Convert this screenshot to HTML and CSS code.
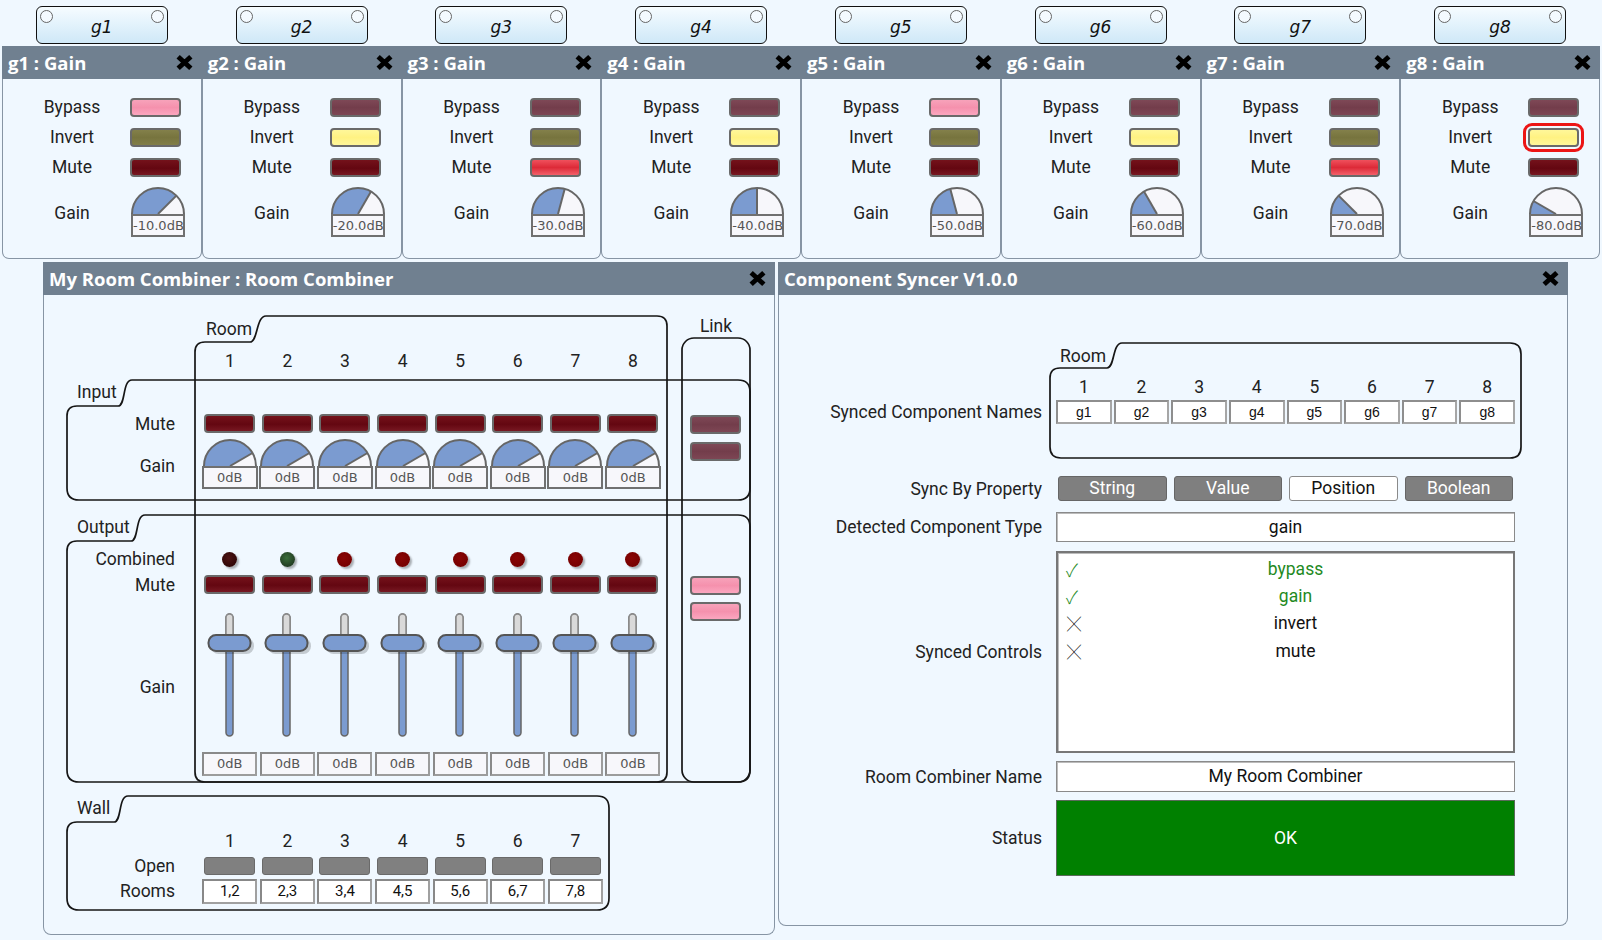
FILE: index.html
```html
<!DOCTYPE html>
<html>
<head>
<meta charset="utf-8">
<title>Component Syncer</title>
<link rel="stylesheet" href="styles.css">
</head>
<body>
<div class="top">
  <div class="gcol">
    <div class="dev"><i class="dot"></i><span class="devname">g1</span><i class="dot"></i></div>
    <section class="gpanel">
      <header class="hdr"><span>g1 : Gain</span><svg class="xic" viewBox="0 0 18 16"><path d="M3,2.5 L15,13.5 M15,2.5 L3,13.5"/></svg></header>
      <div class="gbody">
        <span class="glbl">Bypass</span><span class="led bp-on"></span>
        <span class="glbl">Invert</span><span class="led inv-off"></span>
        <span class="glbl">Mute</span><span class="led mu-off"></span>
        <span class="glbl gain">Gain</span>
        <div class="knob"><svg class="dial" viewBox="0 0 56 28"><path class="dbg" d="M2,28A26,26 0 0 1 54,28Z"/><path class="dfill" d="M28,28L2,28A26,26 0 0 1 46.4,9.6Z"/><path class="dline" d="M28,28L46.4,9.6"/><path class="drim" d="M2,28A26,26 0 0 1 54,28"/></svg><div class="kval">-10.0dB</div></div>
      </div>
    </section>
  </div>
  <div class="gcol">
    <div class="dev"><i class="dot"></i><span class="devname">g2</span><i class="dot"></i></div>
    <section class="gpanel">
      <header class="hdr"><span>g2 : Gain</span><svg class="xic" viewBox="0 0 18 16"><path d="M3,2.5 L15,13.5 M15,2.5 L3,13.5"/></svg></header>
      <div class="gbody">
        <span class="glbl">Bypass</span><span class="led bp-off"></span>
        <span class="glbl">Invert</span><span class="led inv-on"></span>
        <span class="glbl">Mute</span><span class="led mu-off"></span>
        <span class="glbl gain">Gain</span>
        <div class="knob"><svg class="dial" viewBox="0 0 56 28"><path class="dbg" d="M2,28A26,26 0 0 1 54,28Z"/><path class="dfill" d="M28,28L2,28A26,26 0 0 1 41,5.5Z"/><path class="dline" d="M28,28L41,5.5"/><path class="drim" d="M2,28A26,26 0 0 1 54,28"/></svg><div class="kval">-20.0dB</div></div>
      </div>
    </section>
  </div>
  <div class="gcol">
    <div class="dev"><i class="dot"></i><span class="devname">g3</span><i class="dot"></i></div>
    <section class="gpanel">
      <header class="hdr"><span>g3 : Gain</span><svg class="xic" viewBox="0 0 18 16"><path d="M3,2.5 L15,13.5 M15,2.5 L3,13.5"/></svg></header>
      <div class="gbody">
        <span class="glbl">Bypass</span><span class="led bp-off"></span>
        <span class="glbl">Invert</span><span class="led inv-off"></span>
        <span class="glbl">Mute</span><span class="led mu-on"></span>
        <span class="glbl gain">Gain</span>
        <div class="knob"><svg class="dial" viewBox="0 0 56 28"><path class="dbg" d="M2,28A26,26 0 0 1 54,28Z"/><path class="dfill" d="M28,28L2,28A26,26 0 0 1 34.7,2.9Z"/><path class="dline" d="M28,28L34.7,2.9"/><path class="drim" d="M2,28A26,26 0 0 1 54,28"/></svg><div class="kval">-30.0dB</div></div>
      </div>
    </section>
  </div>
  <div class="gcol">
    <div class="dev"><i class="dot"></i><span class="devname">g4</span><i class="dot"></i></div>
    <section class="gpanel">
      <header class="hdr"><span>g4 : Gain</span><svg class="xic" viewBox="0 0 18 16"><path d="M3,2.5 L15,13.5 M15,2.5 L3,13.5"/></svg></header>
      <div class="gbody">
        <span class="glbl">Bypass</span><span class="led bp-off"></span>
        <span class="glbl">Invert</span><span class="led inv-on"></span>
        <span class="glbl">Mute</span><span class="led mu-off"></span>
        <span class="glbl gain">Gain</span>
        <div class="knob"><svg class="dial" viewBox="0 0 56 28"><path class="dbg" d="M2,28A26,26 0 0 1 54,28Z"/><path class="dfill" d="M28,28L2,28A26,26 0 0 1 28,2Z"/><path class="dline" d="M28,28L28,2"/><path class="drim" d="M2,28A26,26 0 0 1 54,28"/></svg><div class="kval">-40.0dB</div></div>
      </div>
    </section>
  </div>
  <div class="gcol">
    <div class="dev"><i class="dot"></i><span class="devname">g5</span><i class="dot"></i></div>
    <section class="gpanel">
      <header class="hdr"><span>g5 : Gain</span><svg class="xic" viewBox="0 0 18 16"><path d="M3,2.5 L15,13.5 M15,2.5 L3,13.5"/></svg></header>
      <div class="gbody">
        <span class="glbl">Bypass</span><span class="led bp-on"></span>
        <span class="glbl">Invert</span><span class="led inv-off"></span>
        <span class="glbl">Mute</span><span class="led mu-off"></span>
        <span class="glbl gain">Gain</span>
        <div class="knob"><svg class="dial" viewBox="0 0 56 28"><path class="dbg" d="M2,28A26,26 0 0 1 54,28Z"/><path class="dfill" d="M28,28L2,28A26,26 0 0 1 21.3,2.9Z"/><path class="dline" d="M28,28L21.3,2.9"/><path class="drim" d="M2,28A26,26 0 0 1 54,28"/></svg><div class="kval">-50.0dB</div></div>
      </div>
    </section>
  </div>
  <div class="gcol">
    <div class="dev"><i class="dot"></i><span class="devname">g6</span><i class="dot"></i></div>
    <section class="gpanel">
      <header class="hdr"><span>g6 : Gain</span><svg class="xic" viewBox="0 0 18 16"><path d="M3,2.5 L15,13.5 M15,2.5 L3,13.5"/></svg></header>
      <div class="gbody">
        <span class="glbl">Bypass</span><span class="led bp-off"></span>
        <span class="glbl">Invert</span><span class="led inv-on"></span>
        <span class="glbl">Mute</span><span class="led mu-off"></span>
        <span class="glbl gain">Gain</span>
        <div class="knob"><svg class="dial" viewBox="0 0 56 28"><path class="dbg" d="M2,28A26,26 0 0 1 54,28Z"/><path class="dfill" d="M28,28L2,28A26,26 0 0 1 15,5.5Z"/><path class="dline" d="M28,28L15,5.5"/><path class="drim" d="M2,28A26,26 0 0 1 54,28"/></svg><div class="kval">-60.0dB</div></div>
      </div>
    </section>
  </div>
  <div class="gcol">
    <div class="dev"><i class="dot"></i><span class="devname">g7</span><i class="dot"></i></div>
    <section class="gpanel">
      <header class="hdr"><span>g7 : Gain</span><svg class="xic" viewBox="0 0 18 16"><path d="M3,2.5 L15,13.5 M15,2.5 L3,13.5"/></svg></header>
      <div class="gbody">
        <span class="glbl">Bypass</span><span class="led bp-off"></span>
        <span class="glbl">Invert</span><span class="led inv-off"></span>
        <span class="glbl">Mute</span><span class="led mu-on"></span>
        <span class="glbl gain">Gain</span>
        <div class="knob"><svg class="dial" viewBox="0 0 56 28"><path class="dbg" d="M2,28A26,26 0 0 1 54,28Z"/><path class="dfill" d="M28,28L2,28A26,26 0 0 1 9.6,9.6Z"/><path class="dline" d="M28,28L9.6,9.6"/><path class="drim" d="M2,28A26,26 0 0 1 54,28"/></svg><div class="kval">-70.0dB</div></div>
      </div>
    </section>
  </div>
  <div class="gcol">
    <div class="dev"><i class="dot"></i><span class="devname">g8</span><i class="dot"></i></div>
    <section class="gpanel">
      <header class="hdr"><span>g8 : Gain</span><svg class="xic" viewBox="0 0 18 16"><path d="M3,2.5 L15,13.5 M15,2.5 L3,13.5"/></svg></header>
      <div class="gbody">
        <span class="glbl">Bypass</span><span class="led bp-off"></span>
        <span class="glbl">Invert</span><span class="led inv-on selected"></span>
        <span class="glbl">Mute</span><span class="led mu-off"></span>
        <span class="glbl gain">Gain</span>
        <div class="knob"><svg class="dial" viewBox="0 0 56 28"><path class="dbg" d="M2,28A26,26 0 0 1 54,28Z"/><path class="dfill" d="M28,28L2,28A26,26 0 0 1 5.5,15Z"/><path class="dline" d="M28,28L5.5,15"/><path class="drim" d="M2,28A26,26 0 0 1 54,28"/></svg><div class="kval">-80.0dB</div></div>
      </div>
    </section>
  </div>
</div>

<div class="mid">
  <section class="comb">
    <header class="hdr"><span>My Room Combiner : Room Combiner</span><svg class="xic" viewBox="0 0 18 16"><path d="M3,2.5 L15,13.5 M15,2.5 L3,13.5"/></svg></header>
    <div class="cbody">
      <svg class="frames" viewBox="0 0 730 639" width="730" height="639">
        <path d="M151,57 Q151,47 161,47 L206,47 C214,47 212,21 222,21 L613,21 Q623,21 623,31 L623,477 Q623,487 613,487 L161,487 Q151,487 151,477 Z"/>
        <rect x="638" y="43" width="68" height="444" rx="12"/>
        <path d="M23,121 Q23,111 33,111 L74,111 C82,111 78,85 88,85 L694,85 Q706,85 706,97 L706,193 Q706,205 694,205 L35,205 Q23,205 23,193 Z"/>
        <path d="M23,256 Q23,246 33,246 L87,246 C95,246 91,220 101,220 L694,220 Q706,220 706,232 L706,475 Q706,487 694,487 L35,487 Q23,487 23,475 Z"/>
        <path d="M23,537 Q23,527 33,527 L70,527 C78,527 74,501 84,501 L553,501 Q565,501 565,513 L565,603 Q565,615 553,615 L35,615 Q23,615 23,603 Z"/>
        <text x="162" y="34">Room</text>
        <text x="672" y="31" text-anchor="middle">Link</text>
        <text x="33" y="97">Input</text>
        <text x="33" y="232">Output</text>
        <text x="33" y="513">Wall</text>
      </svg>

      <div class="cgrid nums">
        <span class="clbl"></span>
        <span class="num">1</span><span class="num">2</span><span class="num">3</span><span class="num">4</span><span class="num">5</span><span class="num">6</span><span class="num">7</span><span class="num">8</span>
      </div>

      <div class="cgrid inp">
        <div class="linkcell in-link"><span class="led bp-off"></span><span class="led bp-off"></span></div>
        <span class="clbl">Mute</span>
        <span class="led mu-off"></span><span class="led mu-off"></span><span class="led mu-off"></span><span class="led mu-off"></span><span class="led mu-off"></span><span class="led mu-off"></span><span class="led mu-off"></span><span class="led mu-off"></span>
        <span class="clbl in-gain">Gain</span>
        <div class="knob ck"><svg class="dial" viewBox="0 0 56 28"><path class="dbg" d="M2,28A26,26 0 0 1 54,28Z"/><path class="dfill" d="M28,28L2,28A26,26 0 0 1 50.5,15Z"/><path class="dline" d="M28,28L50.5,15"/><path class="drim" d="M2,28A26,26 0 0 1 54,28"/></svg><div class="kval">0dB</div></div>
        <div class="knob ck"><svg class="dial" viewBox="0 0 56 28"><path class="dbg" d="M2,28A26,26 0 0 1 54,28Z"/><path class="dfill" d="M28,28L2,28A26,26 0 0 1 50.5,15Z"/><path class="dline" d="M28,28L50.5,15"/><path class="drim" d="M2,28A26,26 0 0 1 54,28"/></svg><div class="kval">0dB</div></div>
        <div class="knob ck"><svg class="dial" viewBox="0 0 56 28"><path class="dbg" d="M2,28A26,26 0 0 1 54,28Z"/><path class="dfill" d="M28,28L2,28A26,26 0 0 1 50.5,15Z"/><path class="dline" d="M28,28L50.5,15"/><path class="drim" d="M2,28A26,26 0 0 1 54,28"/></svg><div class="kval">0dB</div></div>
        <div class="knob ck"><svg class="dial" viewBox="0 0 56 28"><path class="dbg" d="M2,28A26,26 0 0 1 54,28Z"/><path class="dfill" d="M28,28L2,28A26,26 0 0 1 50.5,15Z"/><path class="dline" d="M28,28L50.5,15"/><path class="drim" d="M2,28A26,26 0 0 1 54,28"/></svg><div class="kval">0dB</div></div>
        <div class="knob ck"><svg class="dial" viewBox="0 0 56 28"><path class="dbg" d="M2,28A26,26 0 0 1 54,28Z"/><path class="dfill" d="M28,28L2,28A26,26 0 0 1 50.5,15Z"/><path class="dline" d="M28,28L50.5,15"/><path class="drim" d="M2,28A26,26 0 0 1 54,28"/></svg><div class="kval">0dB</div></div>
        <div class="knob ck"><svg class="dial" viewBox="0 0 56 28"><path class="dbg" d="M2,28A26,26 0 0 1 54,28Z"/><path class="dfill" d="M28,28L2,28A26,26 0 0 1 50.5,15Z"/><path class="dline" d="M28,28L50.5,15"/><path class="drim" d="M2,28A26,26 0 0 1 54,28"/></svg><div class="kval">0dB</div></div>
        <div class="knob ck"><svg class="dial" viewBox="0 0 56 28"><path class="dbg" d="M2,28A26,26 0 0 1 54,28Z"/><path class="dfill" d="M28,28L2,28A26,26 0 0 1 50.5,15Z"/><path class="dline" d="M28,28L50.5,15"/><path class="drim" d="M2,28A26,26 0 0 1 54,28"/></svg><div class="kval">0dB</div></div>
        <div class="knob ck"><svg class="dial" viewBox="0 0 56 28"><path class="dbg" d="M2,28A26,26 0 0 1 54,28Z"/><path class="dfill" d="M28,28L2,28A26,26 0 0 1 50.5,15Z"/><path class="dline" d="M28,28L50.5,15"/><path class="drim" d="M2,28A26,26 0 0 1 54,28"/></svg><div class="kval">0dB</div></div>
      </div>

      <div class="cgrid outp">
        <div class="linkcell out-link"><span class="led bp-on"></span><span class="led bp-on"></span></div>
        <span class="clbl comb-l">Combined</span>
        <span class="lamp dark"></span><span class="lamp green"></span><span class="lamp"></span><span class="lamp"></span><span class="lamp"></span><span class="lamp"></span><span class="lamp"></span><span class="lamp"></span>
        <span class="clbl">Mute</span>
        <span class="led mu-off"></span><span class="led mu-off"></span><span class="led mu-off"></span><span class="led mu-off"></span><span class="led mu-off"></span><span class="led mu-off"></span><span class="led mu-off"></span><span class="led mu-off"></span>
        <span class="clbl out-gain">Gain</span>
        <svg class="fader" viewBox="0 0 48 124"><rect class="ftrk" x="20" y="1" width="7" height="122" rx="3.5"/><rect class="ftop" x="20" y="1" width="7" height="26" rx="3.5"/><rect class="fsh" x="5" y="25" width="43" height="16" rx="7.5"/><rect class="fth" x="2.5" y="22" width="42" height="16" rx="7.5"/></svg>
        <svg class="fader" viewBox="0 0 48 124"><rect class="ftrk" x="20" y="1" width="7" height="122" rx="3.5"/><rect class="ftop" x="20" y="1" width="7" height="26" rx="3.5"/><rect class="fsh" x="5" y="25" width="43" height="16" rx="7.5"/><rect class="fth" x="2.5" y="22" width="42" height="16" rx="7.5"/></svg>
        <svg class="fader" viewBox="0 0 48 124"><rect class="ftrk" x="20" y="1" width="7" height="122" rx="3.5"/><rect class="ftop" x="20" y="1" width="7" height="26" rx="3.5"/><rect class="fsh" x="5" y="25" width="43" height="16" rx="7.5"/><rect class="fth" x="2.5" y="22" width="42" height="16" rx="7.5"/></svg>
        <svg class="fader" viewBox="0 0 48 124"><rect class="ftrk" x="20" y="1" width="7" height="122" rx="3.5"/><rect class="ftop" x="20" y="1" width="7" height="26" rx="3.5"/><rect class="fsh" x="5" y="25" width="43" height="16" rx="7.5"/><rect class="fth" x="2.5" y="22" width="42" height="16" rx="7.5"/></svg>
        <svg class="fader" viewBox="0 0 48 124"><rect class="ftrk" x="20" y="1" width="7" height="122" rx="3.5"/><rect class="ftop" x="20" y="1" width="7" height="26" rx="3.5"/><rect class="fsh" x="5" y="25" width="43" height="16" rx="7.5"/><rect class="fth" x="2.5" y="22" width="42" height="16" rx="7.5"/></svg>
        <svg class="fader" viewBox="0 0 48 124"><rect class="ftrk" x="20" y="1" width="7" height="122" rx="3.5"/><rect class="ftop" x="20" y="1" width="7" height="26" rx="3.5"/><rect class="fsh" x="5" y="25" width="43" height="16" rx="7.5"/><rect class="fth" x="2.5" y="22" width="42" height="16" rx="7.5"/></svg>
        <svg class="fader" viewBox="0 0 48 124"><rect class="ftrk" x="20" y="1" width="7" height="122" rx="3.5"/><rect class="ftop" x="20" y="1" width="7" height="26" rx="3.5"/><rect class="fsh" x="5" y="25" width="43" height="16" rx="7.5"/><rect class="fth" x="2.5" y="22" width="42" height="16" rx="7.5"/></svg>
        <svg class="fader" viewBox="0 0 48 124"><rect class="ftrk" x="20" y="1" width="7" height="122" rx="3.5"/><rect class="ftop" x="20" y="1" width="7" height="26" rx="3.5"/><rect class="fsh" x="5" y="25" width="43" height="16" rx="7.5"/><rect class="fth" x="2.5" y="22" width="42" height="16" rx="7.5"/></svg>
        <span class="clbl"></span>
        <span class="vbox">0dB</span><span class="vbox">0dB</span><span class="vbox">0dB</span><span class="vbox">0dB</span><span class="vbox">0dB</span><span class="vbox">0dB</span><span class="vbox">0dB</span><span class="vbox">0dB</span>
      </div>

      <div class="cgrid wall">
        <span class="clbl"></span>
        <span class="num">1</span><span class="num">2</span><span class="num">3</span><span class="num">4</span><span class="num">5</span><span class="num">6</span><span class="num">7</span>
        <span class="clbl open-l">Open</span>
        <span class="wbtn"></span><span class="wbtn"></span><span class="wbtn"></span><span class="wbtn"></span><span class="wbtn"></span><span class="wbtn"></span><span class="wbtn"></span>
        <span class="clbl rooms-l">Rooms</span>
        <span class="rbox">1,2</span><span class="rbox">2,3</span><span class="rbox">3,4</span><span class="rbox">4,5</span><span class="rbox">5,6</span><span class="rbox">6,7</span><span class="rbox">7,8</span>
      </div>
    </div>
  </section>

  <section class="sync">
    <header class="hdr"><span>Component Syncer V1.0.0</span><svg class="xic" viewBox="0 0 18 16"><path d="M3,2.5 L15,13.5 M15,2.5 L3,13.5"/></svg></header>
    <div class="sbody">
      <div class="srow roomrow">
        <span class="slbl names-l">Synced Component Names</span>
        <div class="roomcell">
          <svg class="sframe" viewBox="0 0 473 117" width="473" height="117">
            <path d="M1,36 Q1,26 11,26 L58,26 C66,26 63,1 73,1 L461,1 Q472,1 472,12 L472,105 Q472,116 461,116 L12,116 Q1,116 1,105 Z"/>
            <text x="11" y="14">Room</text>
          </svg>
          <div class="sgrid">
            <span class="num">1</span><span class="num">2</span><span class="num">3</span><span class="num">4</span><span class="num">5</span><span class="num">6</span><span class="num">7</span><span class="num">8</span>
            <span class="nbox">g1</span><span class="nbox">g2</span><span class="nbox">g3</span><span class="nbox">g4</span><span class="nbox">g5</span><span class="nbox">g6</span><span class="nbox">g7</span><span class="nbox">g8</span>
          </div>
        </div>
      </div>
      <div class="srow byrow">
        <span class="slbl">Sync By Property</span>
        <div class="sctl btns">
          <span class="sbtn">String</span><span class="sbtn">Value</span><span class="sbtn on">Position</span><span class="sbtn">Boolean</span>
        </div>
      </div>
      <div class="srow typerow">
        <span class="slbl">Detected Component Type</span>
        <div class="sctl field typef">gain</div>
      </div>
      <div class="srow listrow">
        <span class="slbl">Synced Controls</span>
        <div class="sctl field list">
          <div class="li ok"><span class="mark">✓</span><span>bypass</span></div>
          <div class="li ok"><span class="mark">✓</span><span>gain</span></div>
          <div class="li"><span class="mark cross">╳</span><span>invert</span></div>
          <div class="li"><span class="mark cross">╳</span><span>mute</span></div>
        </div>
      </div>
      <div class="srow namerow">
        <span class="slbl">Room Combiner Name</span>
        <div class="sctl field namef">My Room Combiner</div>
      </div>
      <div class="srow statrow">
        <span class="slbl">Status</span>
        <div class="sctl status">OK</div>
      </div>
    </div>
  </section>
</div>
</body>
</html>
```

FILE: styles.css
```css
* { box-sizing: border-box; }

body {
  margin: 0;
  width: 1602px;
  height: 940px;
  overflow: hidden;
  background: #f0f8ff;
  font-family: Roboto, "Liberation Sans", sans-serif;
  font-size: 17.5px;
  color: #222;
}

/* ---------- top row of gain blocks ---------- */
.top {
  display: grid;
  grid-template-columns: repeat(8, 199.75px);
  padding: 6px 0 0 2px;
}
.gcol {
  display: flex;
  flex-direction: column;
  align-items: center;
}
.dev {
  width: 132px;
  height: 38px;
  border: 1.5px solid #111;
  border-radius: 6px;
  background: linear-gradient(#f6fcff, #e4f3fc 45%, #cfe8f7);
  display: grid;
  grid-template-columns: 13px 1fr 13px;
  padding: 3px 3px 0;
}
.dot {
  width: 13px;
  height: 13px;
  border-radius: 50%;
  border: 1.3px solid #666;
  background: #f4faff;
}
.devname {
  text-align: center;
  font: italic 17px/34px "DejaVu Sans", sans-serif;
  color: #111;
}
.gpanel { width: 100%; margin-top: 2px; }

.hdr {
  height: 33px;
  background: #708090;
  color: #fff;
  display: flex;
  align-items: center;
  justify-content: space-between;
  padding: 0 8px 0 6px;
  font: 700 18.5px "Open Sans", "DejaVu Sans", sans-serif;
  white-space: nowrap;
}
.xic { width: 19px; height: 17px; flex: none; }
.xic path { stroke: #000; stroke-width: 4.6; fill: none; }

.gbody {
  height: 180px;
  border: 1px solid #8795a4;
  border-top: none;
  border-radius: 0 0 7px 7px;
  display: grid;
  grid-template-columns: 116px 56px;
  grid-template-rows: 30px 30px 30px 55px;
  align-items: center;
  padding: 13px 0 0 11px;
}
.glbl { text-align: center; line-height: 20px; }
.glbl.gain { padding-top: 6px; }
.gbody .led { justify-self: start; }
.gbody .knob { align-self: end; }

/* ---------- buttons / LEDs ---------- */
.led {
  display: block;
  width: 51px;
  height: 19px;
  border: 2px solid #6a6a6a;
  border-radius: 4px;
  justify-self: center;
}
.bp-on  { background: linear-gradient(#f7a2ba, #f591ad 50%, #fba6bf); }
.bp-off { background: linear-gradient(#7e4856, #733d4b 50%, #7d4654); }
.inv-on { background: linear-gradient(#fff79a, #fff282 50%, #fff79a); }
.inv-off{ background: linear-gradient(#83804a, #77743e 50%, #817e48); }
.mu-on  { background: linear-gradient(#f0505c, #dd2a38 50%, #f3606a); }
.mu-off { background: linear-gradient(#74121b, #640711 55%, #771822); }
.selected { outline: 3px solid #ec1515; outline-offset: 2px; }

/* ---------- dial ---------- */
.knob { width: 56px; justify-self: center; }
.dial { display: block; width: 56px; height: 28px; }
.dbg { fill: #f7f7fb; }
.dfill { fill: #7b9bd0; }
.dline { stroke: #666; stroke-width: 2; fill: none; }
.drim { stroke: #666; stroke-width: 2; fill: none; }
.kval {
  height: 23px;
  margin: 0 1px;
  border: 2px solid #707070;
  background: #f7f7fb;
  font: 13px/19px "DejaVu Sans", sans-serif;
  color: #555;
  text-align: center;
  white-space: nowrap;
}

/* ---------- middle ---------- */
.mid {
  display: flex;
  align-items: flex-start;
  gap: 3px;
  margin: 3px 0 0 43px;
}
.comb { width: 732px; }
.sync { width: 790px; }

.cbody {
  position: relative;
  display: flow-root;
  height: 640px;
  border: 1px solid #8795a4;
  border-top: none;
  border-radius: 0 0 8px 8px;
}
.frames { position: absolute; left: 0; top: 0; pointer-events: none; }
.frames path, .frames rect, .sframe path {
  fill: none;
  stroke: #161616;
  stroke-width: 1.7;
}
.frames text, .sframe text {
  font-family: Roboto, "Liberation Sans", sans-serif;
  font-size: 17.5px;
  fill: #222;
  dominant-baseline: central;
}

.cgrid {
  display: grid;
  grid-template-columns: 157px repeat(8, 57.6px) 20.2px 68px;
  align-items: end;
}
.clbl {
  grid-column: 1;
  text-align: right;
  padding-right: 26px;
  line-height: 18px;
  white-space: nowrap;
}
.num { text-align: center; line-height: 24px; }

.nums { margin-top: 54px; height: 24px; }

.inp { margin-top: 42px; grid-template-rows: 18px 56px; }
.in-gain { align-self: start; margin-top: 23px; line-height: 20px; }
.ck { align-self: end; }
.ck .kval { margin: 0; }

.linkcell {
  grid-column: 11;
  display: flex;
  flex-direction: column;
  align-items: center;
  align-self: start;
}
.in-link { grid-row: 1 / span 2; gap: 8px; }
.out-link { grid-row: 2 / span 2; gap: 7px; margin-top: 5px; }

.outp { margin-top: 58px; grid-template-rows: 24px 23px 143px 39px; }
.comb-l { align-self: center; line-height: 24px; }
.out-gain { align-self: start; margin-top: 83px; line-height: 20px; }
.lamp {
  width: 15px;
  height: 15px;
  border-radius: 50%;
  background: radial-gradient(circle at 45% 40%, #8a0505, #760000 70%);
  box-shadow: 2px 2px 2px rgba(0, 0, 0, 0.3);
  justify-self: center;
  align-self: center;
}
.lamp.dark { background: radial-gradient(circle at 45% 40%, #4e1414, #2e0606 75%); }
.lamp.green { background: radial-gradient(circle at 45% 40%, #3a6e3a, #1f361f 80%); }

.fader { width: 48px; height: 124px; justify-self: center; display: block; }
.ftrk { fill: #7b9bd0; stroke: #666; stroke-width: 1.5; }
.ftop { fill: #d9d9d9; stroke: #8a8a8a; stroke-width: 1.5; }
.fsh { fill: rgba(0, 0, 0, 0.18); }
.fth { fill: #7b9bd0; stroke: #555; stroke-width: 2; }

.vbox {
  width: 55px;
  height: 24px;
  justify-self: center;
  border: 2px solid #9c9c9c;
  border-top-color: #8a8a8a;
  border-left-color: #8a8a8a;
  background: #f7f7fb;
  font: 13px/20px "DejaVu Sans", sans-serif;
  color: #555;
  text-align: center;
}

.wall { margin-top: 53px; grid-template-rows: 24px 22px 29px; }
.rooms-l { line-height: 25px; }
.wbtn {
  width: 51px;
  height: 18px;
  justify-self: center;
  background: #808080;
  border: 1.5px solid #6a6a6a;
  border-radius: 3px;
}
.rbox {
  width: 55px;
  height: 25px;
  justify-self: center;
  background: #fff;
  border: 2px solid #a0a0a0;
  border-top-color: #888;
  border-left-color: #888;
  text-align: center;
  font-size: 15px;
  line-height: 21px;
  color: #111;
}

/* ---------- syncer ---------- */
.sbody {
  height: 631px;
  border: 1px solid #8795a4;
  border-top: none;
  border-radius: 0 0 8px 8px;
  padding-top: 47px;
}
.srow { display: flex; align-items: center; }
.slbl {
  flex: none;
  width: 263px;
  text-align: right;
  line-height: 20px;
  white-space: nowrap;
}
.sctl { flex: none; width: 459px; margin-left: 14px; }

.roomrow { align-items: flex-start; }
.names-l { margin-top: 60px; }
.roomcell { position: relative; width: 473px; height: 117px; margin-left: 7px; }
.sframe { position: absolute; left: 0; top: 0; }
.sgrid {
  position: relative;
  display: grid;
  grid-template-columns: repeat(8, 1fr);
  column-gap: 2px;
  padding: 33px 7px 0;
}
.nbox {
  height: 24px;
  margin-top: 1px;
  background: #fff;
  border: 2px solid #a6a6a6;
  border-top-color: #8e8e8e;
  border-left-color: #8e8e8e;
  text-align: center;
  font: 14px/20px "Liberation Sans", Arial, sans-serif;
  color: #111;
}

.byrow { margin-top: 17px; }
.btns { display: flex; gap: 7px; padding: 0 2px; }
.sbtn {
  flex: 1;
  height: 25px;
  line-height: 23px;
  text-align: center;
  background: #7f7f7f;
  border: 1px solid #666;
  border-radius: 3px;
  color: #fff;
}
.sbtn.on { background: #fff; color: #111; border-color: #8a8a8a; }

.field {
  background: #fff;
  border: 1px solid #8a8a8a;
  box-shadow: inset 1px 1px 0 #bbb;
  text-align: center;
  color: #111;
}
.typerow { margin-top: 11px; }
.typef { height: 30px; line-height: 28px; }
.listrow { margin-top: 9px; }
.list { height: 202px; padding-top: 2px; border-width: 2px; border-color: #777; }
.li {
  display: grid;
  grid-template-columns: 20px 1fr;
  height: 27.3px;
  align-items: center;
  color: #111;
}
.li.ok { color: #1f8a1f; }
.mark {
  margin-left: 8px;
  font-family: "Noto Sans CJK JP", "DejaVu Sans", sans-serif;
  font-size: 18px;
  font-weight: 300;
  white-space: nowrap;
}
.mark.cross {
  margin-left: 9px;
  font-size: 14px;
  font-weight: 400;
  line-height: 14px;
}
.namerow { margin-top: 8px; }
.namef { height: 31px; line-height: 29px; }
.statrow { margin-top: 8px; }
.status {
  height: 76px;
  line-height: 74px;
  background: #008000;
  border: 1px solid #5a6a5a;
  color: #fff;
  text-align: center;
}
```
